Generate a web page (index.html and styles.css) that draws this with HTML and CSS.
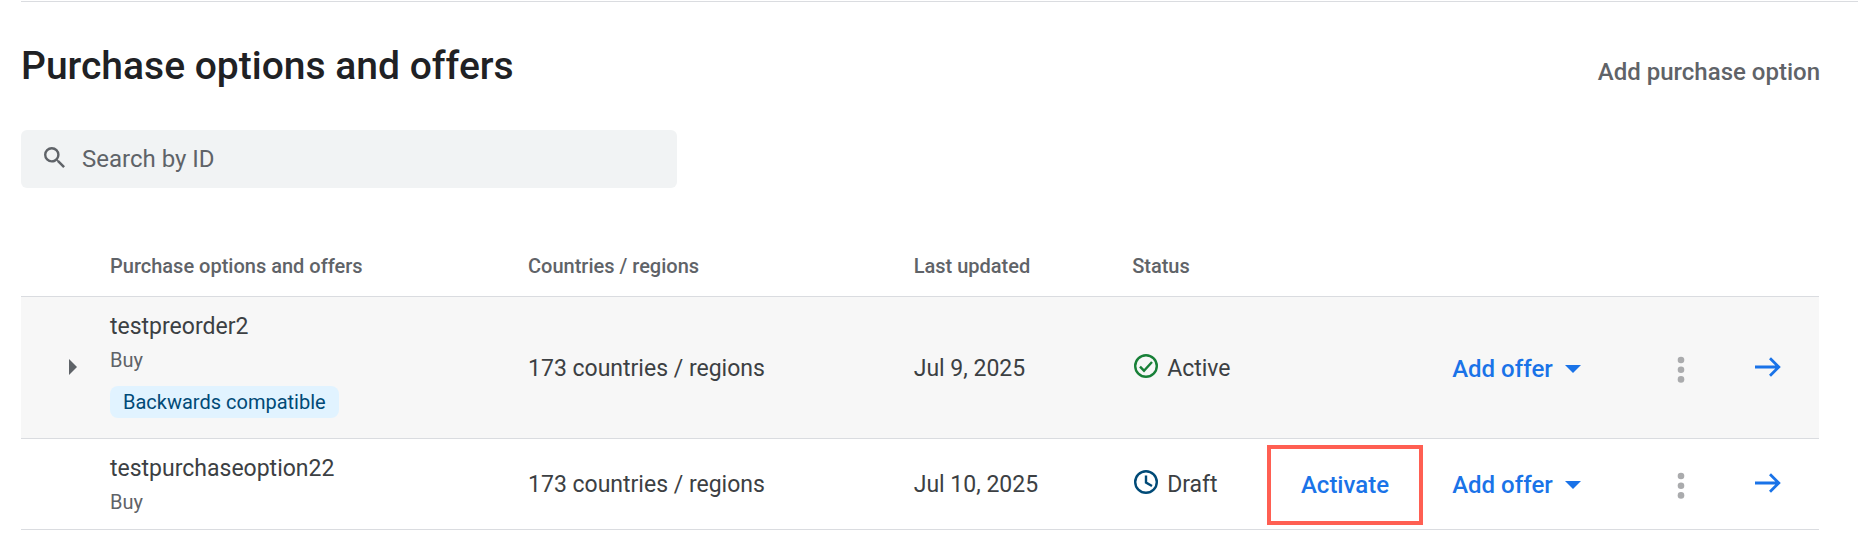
FILE: index.html
```html
<!DOCTYPE html>
<html lang="en">
<head>
<meta charset="utf-8">
<meta name="viewport" content="width=device-width, initial-scale=1">
<title>Purchase options and offers</title>
<link rel="stylesheet" href="styles.css">
</head>
<body>
<svg class="sprite" aria-hidden="true">
  <symbol id="arrow" viewBox="0 0 26 20"><path d="M0 10h24M15 1.200l8.800 8.800-8.800 8.800" fill="none" stroke="currentColor" stroke-width="2.800"/></symbol>
  <symbol id="dots" viewBox="0 0 8 28"><circle cx="4" cy="4" r="3.300"/><circle cx="4" cy="13.700" r="3.300"/><circle cx="4" cy="23.400" r="3.300"/></symbol>
  <symbol id="caret" viewBox="0 0 16 8"><path d="M0 0h16L8 8z"/></symbol>
</svg>
<main class="page">
  <header class="head">
    <h1 class="title">Purchase options and offers</h1>
    <button class="add-option" type="button">Add purchase option</button>
  </header>
  <label class="search">
    <svg class="search-icon" viewBox="3 3 17.500 17.500" aria-hidden="true"><path d="M15.500 14h-.79l-.28-.27A6.470 6.470 0 0 0 16 9.500 6.500 6.500 0 1 0 9.500 16c1.610 0 3.090-.59 4.230-1.570l.27.28v.79l5 4.990L20.490 19zM9.500 14a4.500 4.500 0 1 1 0-9 4.500 4.500 0 0 1 0 9z"/></svg>
    <input class="search-input" type="search" placeholder="Search by ID" aria-label="Search by ID">
  </label>
  <table class="options">
    <colgroup>
      <col class="c-expand"><col class="c-name"><col class="c-regions"><col class="c-updated"><col class="c-status"><col class="c-action"><col class="c-offer"><col class="c-more"><col class="c-open">
    </colgroup>
    <thead>
      <tr>
        <td></td>
        <th scope="col">Purchase options and offers</th>
        <th scope="col">Countries / regions</th>
        <th scope="col">Last updated</th>
        <th scope="col">Status</th>
        <td></td><td></td><td></td><td></td>
      </tr>
    </thead>
    <tbody>
      <tr class="row-tinted">
        <td class="expand-cell"><button class="icon-button" type="button" aria-label="Expand testpreorder2"><svg class="expand-icon" viewBox="0 0 8 16"><path d="M0 0l8 8-8 8z"/></svg></button></td>
        <td class="name-cell">
          <div class="name">testpreorder2</div>
          <div class="kind">Buy</div>
          <span class="chip">Backwards compatible</span>
        </td>
        <td class="text-cell">173 countries / regions</td>
        <td class="text-cell">Jul 9, 2025</td>
        <td class="text-cell"><div class="status"><svg class="status-icon active" viewBox="0 0 24 24" aria-hidden="true"><circle cx="12" cy="12" r="10.800"/><path d="M6 12.700l4 4 8-8.700"/></svg>Active</div></td>
        <td></td>
        <td class="text-cell"><button class="offer" type="button">Add offer<svg class="caret"><use href="#caret"/></svg></button></td>
        <td class="more-cell"><button class="icon-button more" type="button" aria-label="More actions"><svg class="dots"><use href="#dots"/></svg></button></td>
        <td class="open-cell"><a class="open" href="#testpreorder2" aria-label="Open testpreorder2"><svg class="arrow"><use href="#arrow"/></svg></a></td>
      </tr>
      <tr>
        <td></td>
        <td class="name-cell">
          <div class="name">testpurchaseoption22</div>
          <div class="kind">Buy</div>
        </td>
        <td class="text-cell">173 countries / regions</td>
        <td class="text-cell">Jul 10, 2025</td>
        <td class="text-cell"><div class="status"><svg class="status-icon draft" viewBox="0 0 24 24" aria-hidden="true"><circle cx="12" cy="12" r="10.800"/><path d="M12 5.500v7l6 3.500"/></svg>Draft</div></td>
        <td class="action-cell"><button class="activate" type="button">Activate</button></td>
        <td class="text-cell"><button class="offer" type="button">Add offer<svg class="caret"><use href="#caret"/></svg></button></td>
        <td class="more-cell"><button class="icon-button more" type="button" aria-label="More actions"><svg class="dots"><use href="#dots"/></svg></button></td>
        <td class="open-cell"><a class="open" href="#testpurchaseoption22" aria-label="Open testpurchaseoption22"><svg class="arrow"><use href="#arrow"/></svg></a></td>
      </tr>
    </tbody>
  </table>
</main>
</body>
</html>
```
FILE: styles.css
```css
* { box-sizing: border-box; }

body {
  margin: 0;
  background: #fff;
  color: #3c4043;
  font: 400 23px/32px Roboto, "Noto Sans", sans-serif;
}

button {
  padding: 0;
  border: 0;
  background: none;
  color: inherit;
  font: inherit;
  cursor: pointer;
}

svg { display: block; fill: currentColor; flex: none; }

.sprite { position: absolute; width: 0; height: 0; }

.page {
  margin: 1px 16px 0 21px;
  border-top: 1px solid #dadce0;
}

.head {
  display: flex;
  justify-content: space-between;
  align-items: center;
  padding: 40px 38px 40px 0;
}

.title {
  margin: 0;
  color: #202124;
  font-size: 39px;
  font-weight: 500;
  line-height: 48px;
}

.add-option {
  padding-top: 12px;
  color: #5f6368;
  font-size: 24px;
  font-weight: 500;
}

.search {
  display: flex;
  align-items: center;
  gap: 17px;
  width: 656px;
  max-width: 100%;
  height: 58px;
  padding: 0 23px;
  border-radius: 6px;
  background: #f1f3f4;
  color: #5f6368;
}

.search-icon { width: 21px; height: 21px; margin-bottom: 4px; }

.search-input {
  flex: 1;
  min-width: 0;
  padding: 0;
  border: 0;
  outline: 0;
  background: none;
  color: inherit;
  font: inherit;
  font-size: 24px;
}

.search-input::placeholder { color: #5f6368; opacity: 1; }

.options {
  width: calc(100% - 39px);
  margin-top: 48px;
  border-collapse: separate;
  border-spacing: 0;
  table-layout: fixed;
}

.c-expand { width: 4.95%; }
.c-name { width: 23.25%; }
.c-regions { width: 21.45%; }
.c-updated { width: 12.15%; }
.c-status { width: 7.5%; }
.c-action { width: 10.3%; }
.c-offer { width: 12.5%; }
.c-more { width: 1.9%; }
.c-open { width: 6%; }

.options th,
.options td {
  padding: 0;
  border-bottom: 1px solid #dadce0;
  text-align: left;
  white-space: nowrap;
}

.options th {
  height: 61px;
  color: #5f6368;
  font-size: 20px;
  font-weight: 500;
}

.row-tinted { background: #f7f7f7; }

.options .name-cell { padding: 14px 0 12px; }

.options .text-cell,
.options .action-cell { padding-top: 2px; }

.options .more-cell { padding-top: 4px; }

.kind {
  padding-top: 2px;
  color: #5f6368;
  font-size: 20px;
  line-height: 30px;
}

.chip {
  display: inline-block;
  margin: 11px 0 8px;
  padding: 0 13px;
  border-radius: 8px;
  background: #e1f3ff;
  color: #004a77;
  font-size: 20px;
  vertical-align: top;
}

.status {
  display: flex;
  align-items: center;
  gap: 9px;
  padding-left: 2px;
}

.status-icon {
  width: 24px;
  height: 24px;
  margin-bottom: 6px;
  fill: none;
  stroke: currentColor;
  stroke-width: 2.400;
}

.active { color: #188038; }
.draft { color: #004a77; }

.activate {
  display: block;
  width: 156px;
  height: 80px;
  border: 4px solid #ff5f52;
  color: #1a73e8;
  font-size: 24px;
  font-weight: 500;
}

.offer {
  display: flex;
  align-items: center;
  gap: 12px;
  color: #1a73e8;
  font-size: 24px;
  font-weight: 500;
}

.caret { width: 16px; height: 8px; }

.icon-button { display: block; color: #5f6368; }

.expand-cell .icon-button { margin-left: 48px; }

.expand-icon { width: 8px; height: 16px; }

.icon-button.more { color: #aaabad; }

.dots { width: 8px; height: 28px; }

.options .expand-cell { padding-bottom: 2px; }

.options .open-cell { padding: 0 38px 2px 0; }

.open { display: flex; justify-content: flex-end; color: #1a73e8; }

.arrow { width: 26px; height: 20px; }
```
